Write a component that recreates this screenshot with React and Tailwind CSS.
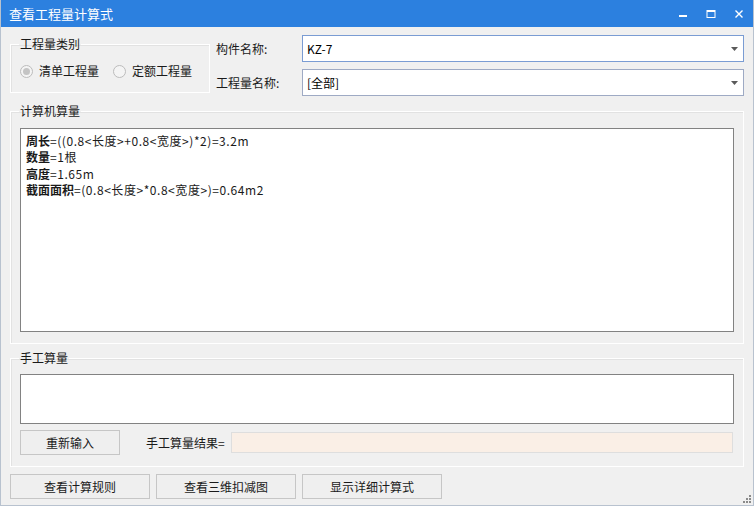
import React from "react";

const font = { fontFamily: '"Noto Sans CJK SC", "Noto Sans", sans-serif' };

function Radio({ checked, label }) {
  return (
    <label className="flex items-center gap-[6px]">
      <span className="flex h-[13px] w-[13px] items-center justify-center rounded-full border border-[#bcbcbc] bg-[#f4f4f4]">
        {checked && <span className="h-[7px] w-[7px] rounded-full bg-[#c4c4c4]" />}
      </span>
      <span className="text-[12px] leading-[16px] text-[#1a1a1a]">{label}</span>
    </label>
  );
}

function Combo({ value, focused }) {
  return (
    <div
      className={`flex h-[27px] w-[442px] items-center justify-between border bg-white pl-[4px] pr-[4px] ${
        focused ? "border-[#7a9cd3]" : "border-[#9eaac4]"
      }`}
    >
      <span className="text-[12px] leading-[16px] text-black">{value}</span>
      <svg width="7" height="4" viewBox="0 0 7 4" className="mr-[1px]">
        <path d="M0 0 H7 L3.5 4 Z" fill="#5a5a5a" />
      </svg>
    </div>
  );
}

function Group({ title, className, children }) {
  return (
    <fieldset
      className={`border border-white shadow-[inset_1px_1px_0_#e2e2e2] ${className}`}
    >
      <legend className="ml-[8px] px-[1px] text-[12px] leading-[16px] text-[#1a1a1a]">
        {title}
      </legend>
      {children}
    </fieldset>
  );
}

function Btn({ children, className }) {
  return (
    <button
      type="button"
      className={`flex h-[25px] items-center justify-center border border-[#c6c6c6] bg-[#efefef] text-[12px] leading-[16px] text-[#1a1a1a] ${className}`}
    >
      {children}
    </button>
  );
}

export default function App() {
  const lines = [
    ["周长", "=((0.8<长度>+0.8<宽度>)*2)=3.2m"],
    ["数量", "=1根"],
    ["高度", "=1.65m"],
    ["截面面积", "=(0.8<长度>*0.8<宽度>)=0.64m2"],
  ];

  return (
    <div
      className="relative flex h-[506px] w-[754px] flex-col overflow-hidden border-x border-b border-[#b8c2cf] bg-[#f0f0f0]"
      style={font}
    >
      {/* 标题栏 */}
      <div className="flex h-[27px] shrink-0 items-center justify-between bg-[#2c80df] pl-[8px]">
        <span className="text-[13px] leading-[16px] text-white">查看工程量计算式</span>
        <div className="flex h-full items-center">
          <div className="flex w-[28px] justify-center">
            <svg width="10" height="10" viewBox="0 0 10 10">
              <rect x="1" y="6" width="8" height="2" fill="#fff" />
            </svg>
          </div>
          <div className="flex w-[28px] justify-center">
            <svg width="10" height="10" viewBox="0 0 10 10">
              <rect x="1" y="1.5" width="8" height="7" fill="none" stroke="#fff" strokeWidth="1" />
              <rect x="1" y="1" width="8" height="2" fill="#fff" />
            </svg>
          </div>
          <div className="flex w-[28px] justify-center">
            <svg width="10" height="10" viewBox="0 0 10 10">
              <path d="M1.5 1.5 L8.5 8.5 M8.5 1.5 L1.5 8.5" stroke="#fff" strokeWidth="1.4" />
            </svg>
          </div>
        </div>
      </div>

      <div className="flex flex-col px-[9px]">
        {/* 顶部 */}
        <div className="mt-[9px] flex items-start">
          <Group title="工程量类别" className="h-[57px] w-[200px]">
            <div className="mt-[11px] flex items-center gap-[14px] pl-[9px]">
              <Radio checked label="清单工程量" />
              <Radio label="定额工程量" />
            </div>
          </Group>
          <div className="ml-[6px] mt-[-1px] flex flex-col gap-[7px]">
            <div className="flex items-center">
              <span className="w-[86px] text-[12px] leading-[16px] text-[#1a1a1a]">构件名称:</span>
              <Combo value="KZ-7" focused />
            </div>
            <div className="flex items-center">
              <span className="w-[86px] text-[12px] leading-[16px] text-[#1a1a1a]">工程量名称:</span>
              <Combo value="[全部]" />
            </div>
          </div>
        </div>

        {/* 计算机算量 */}
        <Group title="计算机算量" className="mt-[7px] h-[241px] w-[734px]">
          <div className="ml-[9px] mt-[9px] h-[204px] w-[714px] border border-[#828282] bg-white px-[5px] pt-[4px] text-[12px] leading-[16.3px] text-[#1a1a1a]">
            {lines.map(([k, v]) => (
              <div key={k}>
                <span className="font-bold">{k}</span>
                <span className="tracking-[0.55px]">{v}</span>
              </div>
            ))}
          </div>
        </Group>

        {/* 手工算量 */}
        <Group title="手工算量" className="mt-[6px] h-[117px] w-[734px]">
          <div className="ml-[9px] mt-[8px] h-[50px] w-[714px] border border-[#828282] bg-white" />
          <div className="ml-[9px] mt-[6px] flex items-center">
            <Btn className="w-[100px]">重新输入</Btn>
            <span className="ml-[26px] text-[12px] leading-[16px] text-[#1a1a1a]">手工算量结果=</span>
            <div className="ml-[6px] h-[21px] w-[502px] border border-[#dedede] bg-[#faefe6]" />
          </div>
        </Group>

        {/* 底部按钮 */}
        <div className="mt-[7px] flex gap-[6px]">
          <Btn className="w-[140px]">查看计算规则</Btn>
          <Btn className="w-[140px]">查看三维扣减图</Btn>
          <Btn className="w-[140px]">显示详细计算式</Btn>
        </div>
      </div>

      {/* 尺寸调整角 */}
      <svg width="10" height="10" viewBox="0 0 10 10" className="absolute bottom-[1px] right-[1px]">
        <rect x="7" y="1" width="2" height="2" fill="#8a8a8a" />
        <rect x="4" y="4" width="2" height="2" fill="#8a8a8a" />
        <rect x="7" y="4" width="2" height="2" fill="#8a8a8a" />
        <rect x="1" y="7" width="2" height="2" fill="#8a8a8a" />
        <rect x="4" y="7" width="2" height="2" fill="#8a8a8a" />
        <rect x="7" y="7" width="2" height="2" fill="#8a8a8a" />
      </svg>
    </div>
  );
}
